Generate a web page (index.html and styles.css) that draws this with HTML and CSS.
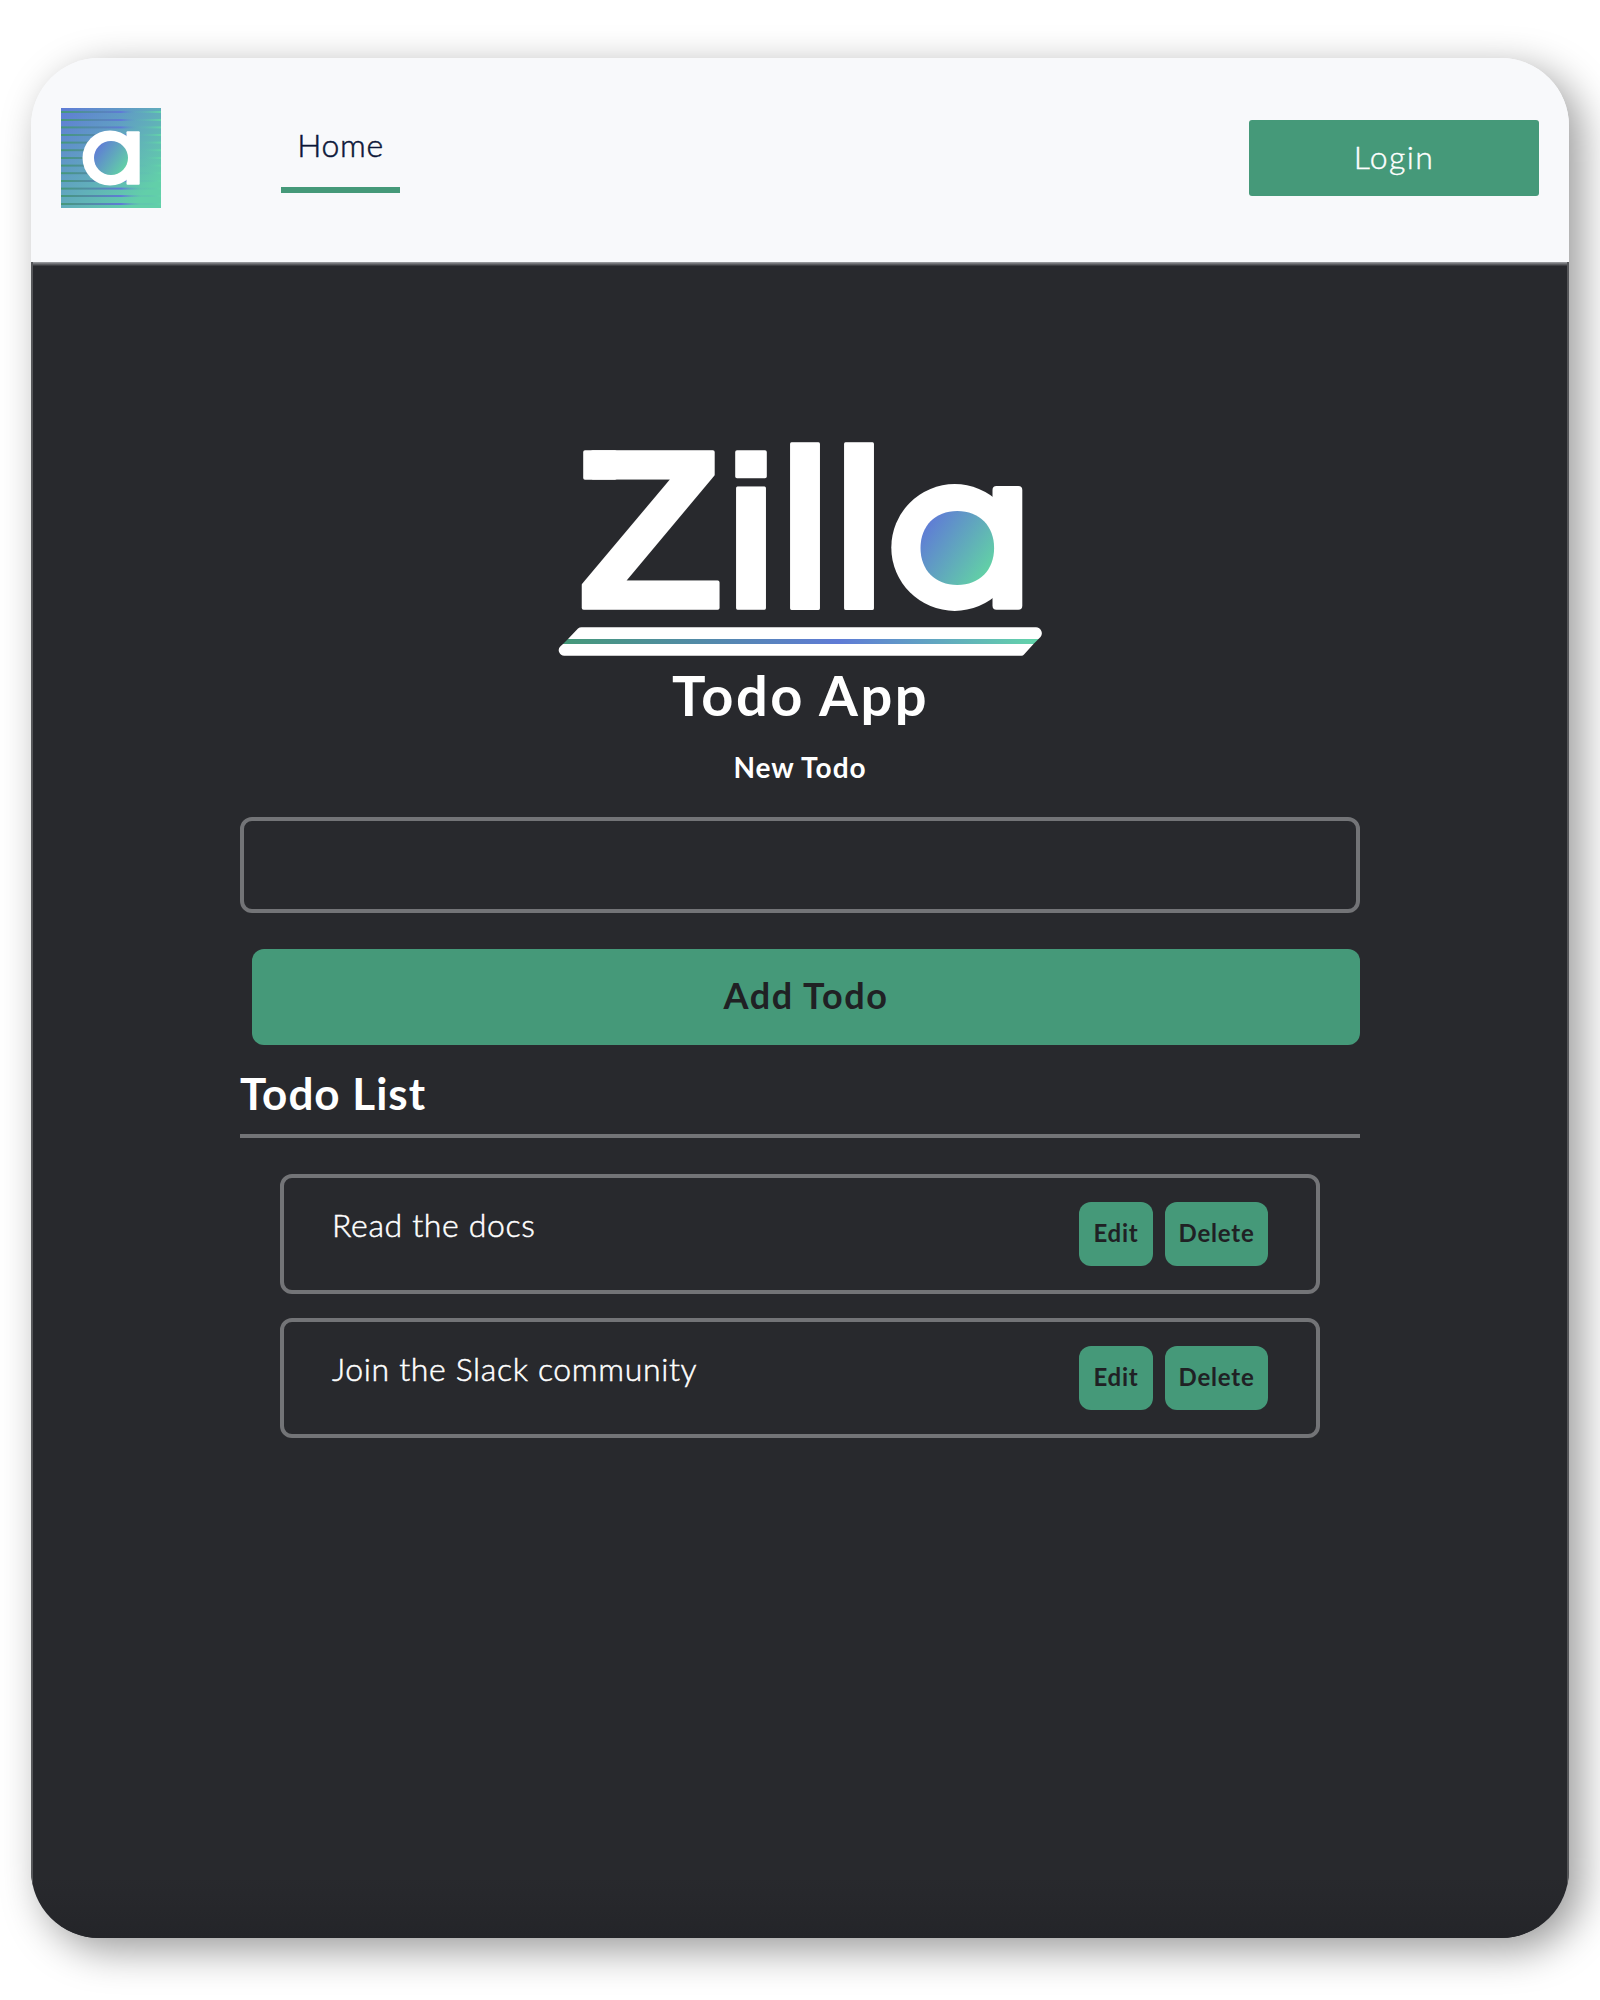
FILE: index.html
```html
<!DOCTYPE html>
<html lang="en">
<head>
<meta charset="utf-8">
<title>Zilla Todo App</title>
<link rel="stylesheet" href="styles.css">
</head>
<body>
<div class="window">
  <header class="header">
    <svg class="brand" viewBox="0 0 100 100" aria-hidden="true">
      <defs>
        <linearGradient id="tile" x1="0" y1="0" x2="1" y2="1">
          <stop offset="0" stop-color="#5f7bd6"/><stop offset=".85" stop-color="#62cfa9"/>
        </linearGradient>
        <linearGradient id="stripe" gradientUnits="userSpaceOnUse" x1="0" y1="0" x2="100" y2="0">
          <stop offset="0" stop-color="#459979"/><stop offset=".6" stop-color="#5f7bd6"/><stop offset=".8" stop-color="#5fb8b4" stop-opacity=".3"/><stop offset="1" stop-color="#63d4a9"/>
        </linearGradient>
        <linearGradient id="dot" x1="0.05" y1="0.2" x2=".9" y2=".8">
          <stop offset="0" stop-color="#5f7bd6"/><stop offset="1" stop-color="#62cfa7"/>
        </linearGradient>
      </defs>
      <rect width="100" height="100" fill="url(#tile)"/>
      <g fill="url(#stripe)">
        <rect y="3" width="100" height="2"/><rect y="11" width="100" height="2"/><rect y="18.4" width="100" height="2"/>
        <rect y="26" width="100" height="2"/><rect y="33.6" width="100" height="2"/><rect y="41.2" width="100" height="2"/>
        <rect y="49" width="100" height="2"/><rect y="56.6" width="100" height="2"/><rect y="64.2" width="100" height="2"/>
        <rect y="72" width="100" height="2"/><rect y="79.6" width="100" height="2"/><rect y="87" width="100" height="2"/>
        <rect y="95" width="100" height="2"/>
      </g>
      <circle cx="49" cy="50" r="27.5" fill="#fff"/>
      <rect x="65.5" y="23.2" width="13.2" height="53.6" rx="1" fill="#fff"/>
      <circle cx="50" cy="50" r="17" fill="url(#dot)"/>
    </svg>
    <nav class="nav"><a class="nav-link">Home</a></nav>
    <button class="login">Login</button>
  </header>
  <main class="main">
    <svg class="wordmark" viewBox="557 440 486 217" role="img" aria-label="Zilla">
      <defs>
        <linearGradient id="beam" x1="0" y1="0" x2="1" y2="0">
          <stop offset="0" stop-color="#459979"/><stop offset=".58" stop-color="#5f7bd6"/><stop offset="1" stop-color="#63d4a9"/>
        </linearGradient>
        <clipPath id="stem"><rect x="725" y="460" width="50" height="160"/></clipPath>
      </defs>
      <g class="letters">
        <text transform="translate(576.5 608) scale(1.068 1)">Z</text>
        <rect x="585" y="452" width="30" height="26"/>
        <g clip-path="url(#stem)"><text transform="translate(724 608) scale(.86 1)">i</text></g>
        <rect x="737" y="452" width="28" height="24.5"/>
        <text transform="translate(778 608) scale(.86 1)">l</text>
        <text transform="translate(832 608) scale(.86 1)">l</text>
      </g>
      <circle cx="954.7" cy="547.5" r="63.4" fill="#fff"/>
      <rect x="992.5" y="486" width="29.8" height="123.8" rx="4" fill="#fff"/>
      <path d="M920.5 548c0-22 14.500-37 36.800-37s36.800 15 36.800 37s-14.500 37-36.800 37s-36.800-15-36.800-37z" fill="url(#dot)"/>
      <path d="M568 639l10-10.500q1.500-1.200 3.500-1.200H1036a6 6 0 0 1 4.500 9.700l-2 2z" fill="#fff"/>
      <path d="M568 639h470.500l-5 5H563z" fill="url(#beam)"/>
      <path d="M563 644h470.500l-9.500 10.500q-1 1.200-2.500 1.200H564.500a5.500 5.500 0 0 1-4-9.500z" fill="#fff"/>
    </svg>
    <h1 class="title">Todo App</h1>
    <form class="form">
      <label class="label" for="todo">New Todo</label>
      <input class="input" id="todo" type="text">
      <button class="add" type="button">Add Todo</button>
    </form>
    <h2 class="list-title">Todo List</h2>
    <ul class="list">
      <li class="item"><span class="item-text">Read the docs</span><button class="action edit">Edit</button><button class="action delete">Delete</button></li>
      <li class="item"><span class="item-text">Join the Slack community</span><button class="action edit">Edit</button><button class="action delete">Delete</button></li>
    </ul>
  </main>
</div>
</body>
</html>
```
FILE: styles.css
```css
* { box-sizing: border-box; }
body {
  margin: 0;
  height: 2000px;
  padding: 58px 31px 0;
  background: #fff;
  font-family: Lato, "Open Sans", sans-serif;
  overflow: hidden;
}
button { border: 0; margin: 0; font-family: inherit; }
.window {
  height: 1880px;
  border-radius: 68px;
  overflow: hidden;
  display: flex;
  flex-direction: column;
  background: #f8f9fb;
  box-shadow: 12px 12px 40px rgba(0, 0, 0, .4);
}
.header {
  height: 204px;
  flex: none;
  display: flex;
  align-items: flex-start;
  padding: 50px 30px 0;
  background: #f8f9fb;
}
.brand { width: 100px; height: 100px; display: block; }
.nav { flex: 1; display: flex; padding: 15px 0 0 120px; }
.nav-link {
  width: 119px;
  height: 70px;
  border-bottom: 6px solid #459979;
  text-align: center;
  font-size: 32px;
  line-height: 44px;
  font-weight: 300;
  letter-spacing: .6px;
  color: #0b1537;
  -webkit-text-stroke: .5px #0b1537;
}
.login {
  width: 290px;
  height: 76px;
  margin-top: 12px;
  padding: 0 0 4px;
  border-radius: 3px;
  background: #459979;
  color: #fff;
  font-size: 32px;
  font-weight: 300;
  letter-spacing: 1.4px;
  -webkit-text-stroke: .4px #fff;
}
.main {
  flex: 1;
  display: flex;
  flex-direction: column;
  padding: 178px 207px 0;
  border: solid #56575a;
  border-width: 0 2px;
  background:
    linear-gradient(#a2a4a8, #5b5c60 60%, #303135) top / 100% 4px no-repeat,
    linear-gradient(rgba(36, 37, 41, 0), #242529) bottom / 100% 60px no-repeat,
    #28292d;
  color: #fff;
}
.wordmark { width: 486px; height: 217px; align-self: center; display: block; overflow: visible; }
.letters {
  font-family: "Liberation Sans", Arial, sans-serif;
  font-weight: 700;
  font-size: 227px;
  fill: #fff;
  stroke: #fff;
  stroke-width: 3.6px;
  stroke-linejoin: round;
}
.title {
  margin: 0;
  padding-top: 2px;
  font-size: 56px;
  line-height: 72px;
  font-weight: 700;
  letter-spacing: 2.5px;
  text-indent: 1px;
  text-align: center;
}
.form { display: flex; flex-direction: column; padding-top: 16px; }
.label { font-size: 28px; line-height: 40px; font-weight: 700; letter-spacing: 1px; text-align: center; }
.input {
  height: 96px;
  margin: 30px 0 36px;
  border: 4px solid #737477;
  border-radius: 12px;
  background: transparent;
}
.add {
  height: 96px;
  margin-left: 12px;
  padding: 0 0 4px;
  border-radius: 12px;
  background: #459979;
  color: #202124;
  font-size: 36px;
  font-weight: 700;
  letter-spacing: 1.6px;
}
.list-title {
  margin: 20px 0 0;
  padding-bottom: 13px;
  border-bottom: 4px solid #737477;
  font-size: 44px;
  line-height: 56px;
  font-weight: 700;
  letter-spacing: 1px;
}
.list {
  margin: 36px 0 0;
  padding: 0 40px;
  list-style: none;
  display: flex;
  flex-direction: column;
  gap: 24px;
}
.item {
  height: 120px;
  display: flex;
  align-items: flex-start;
  gap: 12px;
  padding: 24px 48px;
  border: 4px solid #737477;
  border-radius: 12px;
}
.item-text {
  flex: 1;
  font-size: 32px;
  line-height: 45px;
  font-weight: 300;
  letter-spacing: .65px;
  -webkit-text-stroke: .5px #fff;
}
.action {
  height: 64px;
  padding: 0 0 3px;
  border-radius: 12px;
  background: #459979;
  color: #202124;
  font-size: 24px;
  font-weight: 700;
  letter-spacing: .8px;
}
.edit { width: 74px; }
.delete { width: 103px; }
```
